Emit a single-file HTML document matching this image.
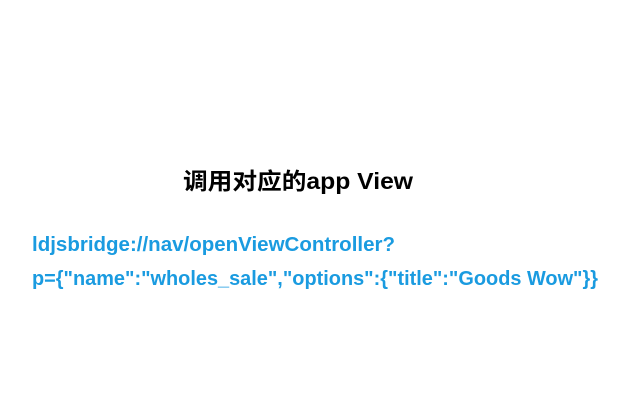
<!DOCTYPE html>
<html><head><meta charset="utf-8"><style>
html,body{margin:0;padding:0;background:#fff;width:640px;height:400px;overflow:hidden}
</style></head><body>
<svg width="640" height="400" xmlns="http://www.w3.org/2000/svg">
<text x="183" y="189" font-family="Liberation Sans, Noto Sans CJK SC, sans-serif" font-weight="bold" font-size="23" fill="#000" textLength="230" lengthAdjust="spacingAndGlyphs">调用对应的app View</text>
<text x="32" y="251" font-family="Liberation Sans, sans-serif" font-weight="bold" font-size="20" fill="#1a9be0" textLength="363" lengthAdjust="spacingAndGlyphs">ldjsbridge://nav/openViewController?</text>
<text x="32" y="285" font-family="Liberation Sans, sans-serif" font-weight="bold" font-size="20" fill="#1a9be0" textLength="566" lengthAdjust="spacingAndGlyphs">p={"name":"wholes_sale","options":{"title":"Goods Wow"}}</text>
</svg>
</body></html>
